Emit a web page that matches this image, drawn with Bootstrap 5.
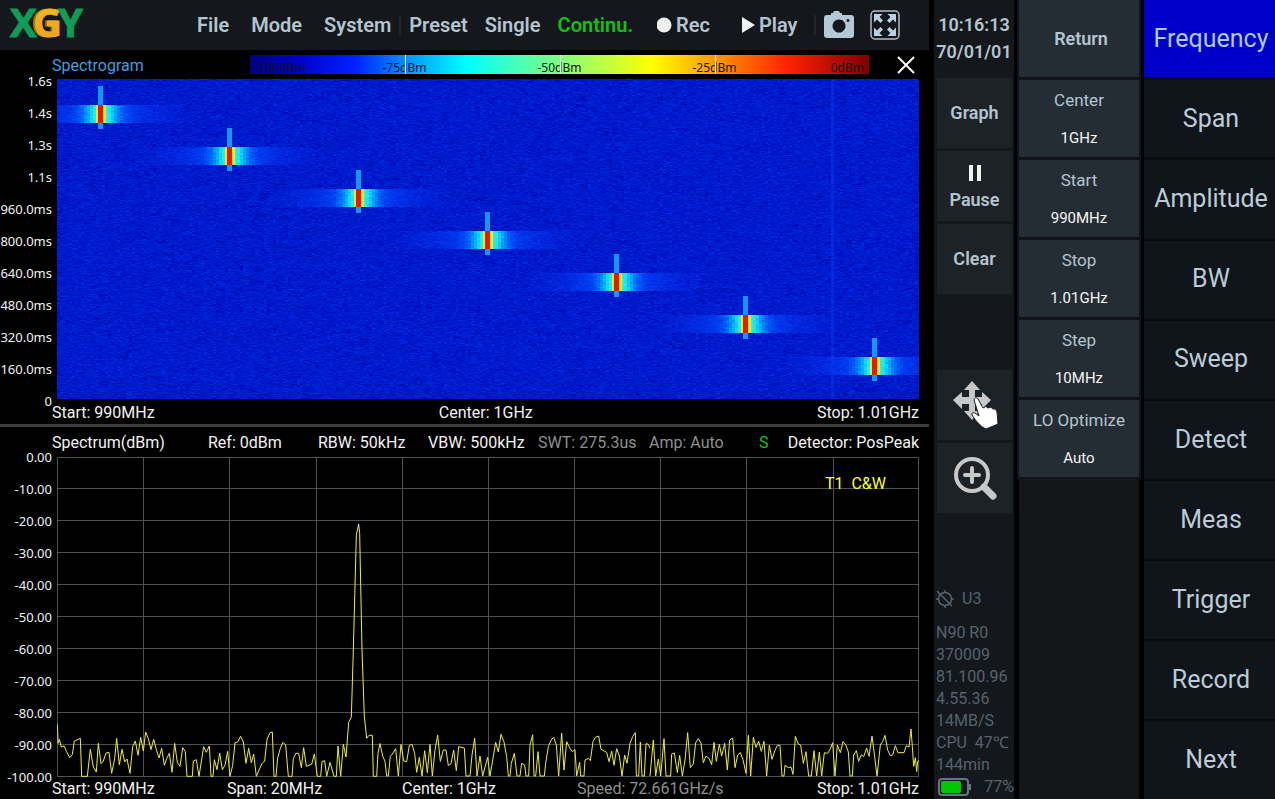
<!DOCTYPE html>
<html lang="en">
<head>
<meta charset="utf-8">
<meta name="viewport" content="width=device-width, initial-scale=1">
<title>Spectrum Analyzer</title>
<link rel="stylesheet" href="https://cdn.jsdelivr.net/npm/bootstrap@5.3.0/dist/css/bootstrap.min.css">
<style>
  body { background: #000; color: #f2f2f2; font: 16px/22px Roboto, "Liberation Sans", sans-serif; }
  button { border: 0; padding: 0; background: none; color: inherit; }
  .shell { display: grid; grid-template-columns: minmax(0, 1fr) 80px 120px 131px; column-gap: 5px; min-height: 100vh; }
  .topbar { height: 50px; background: #14171b; color: #b4c4d0; padding: 0 29px 0 8px; }
  .topbar button { font-size: 20px; line-height: 24px; font-weight: 600; white-space: nowrap; }
  .menu-a { gap: 22px; margin-left: 113px; }
  .menu-b { gap: 17px; margin-left: 8px; }
  .play { margin-left: 32px; }
  .rule { width: 2px; height: 20px; background: #22262a; }
  .continuous { color: #12c212; }
  .sg-head { height: 29px; padding: 2px 12px 0 52px; }
  .sg-title { color: #3d9ee0; width: 198px; }
  .scale { width: 619px; height: 19px; margin-top: -3px; color: #10131c; font: 12px/25px "Noto Sans", sans-serif;
    background: linear-gradient(90deg, #000080 0, #0000c8 8%, #0022ff 17%, #0090ff 25%, #00ffff 35%, #80ff80 50%, #ffff00 65%, #ff9a00 75%, #ff2000 87%, #800000 100%); }
  .scale span { flex: 1; position: relative; text-align: center; height: 19px; }
  .scale .edge { flex: 0 0 77px; padding: 0 5px; }
  .scale .tick::before { content: ""; position: absolute; left: 50%; top: 0; width: 1px; height: 19px; background: #fff; }
  .plot { flex: 1 1 0; min-height: 200px; }
  .axis { width: 57px; padding-right: 5px; font: 13px/16px "Noto Sans", sans-serif; text-align: right; white-space: nowrap; }
  .sg-axis { margin: -6px 0 -10px; }
  .sp-axis { margin: -8px 0; }
  .field { position: relative; margin-right: 10px; }
  .field canvas, .field svg { position: absolute; inset: 0; width: 100%; height: 100%; }
  .trace-name { position: absolute; top: 16px; right: 33px; color: #ffff28; }
  .foot { padding: 0 10px 0 52px; white-space: nowrap; }
  .sg-foot { height: 25px; line-height: 27px; }
  .divider { height: 3px; background: #3c3c3e; }
  .sp-head { display: grid; grid-template-columns: 156fr 110fr 110fr 110fr 111fr 110fr 27fr 133fr; height: 30px; line-height: 32px; }
  .sp-foot { display: grid; grid-template-columns: repeat(4, 175fr) 167fr; height: 22px; line-height: 24px; }
  .dim { color: #8f8f8f; }
  .side { background: #14171b; padding: 11px 2px 1px; }
  .side, .params button { color: #b4c4d0; }
  .clock { font-size: 18px; line-height: 27px; font-weight: 600; height: 67px; white-space: nowrap; }
  .tool { height: 70px; margin: 0 0 3px 1px; background: #1d2227; font-size: 18px; font-weight: 600; }
  .tools-low { margin-top: 73px; }
  .stats { color: #56636d; margin-top: auto; margin-right: -2px; white-space: nowrap; }
  .params { background: #141619; }
  .param { height: 77px; margin-bottom: 3px; background: #252d34; outline: 2px solid #10141a; font-size: 17px; }
  .param-back { font-size: 18px; font-weight: 600; }
  .param-value { color: #f5f5f5; font-size: 15px; }
  .modes { background: #0a0e12; gap: 3px; }
  .mode { flex: 1; background: #0f151b; color: #bccbd6; font-size: 25px; padding-left: 3px; }
  .mode.active { background: #0000c8; color: #aecbf2; }
</style>
</head>
<body>
<div class="shell">
  <main class="d-flex flex-column">
    <header class="topbar d-flex align-items-center">
      <svg width="76" height="36" role="img" aria-label="XGY" font-family="Open Sans" font-weight="700" font-size="40">
        <defs>
          <linearGradient id="leaf" x2="1" y2="1"><stop stop-color="#16a04b"/><stop offset="1" stop-color="#079a64"/></linearGradient>
          <linearGradient id="gold" x2="0" y2="1"><stop stop-color="#f2c51c"/><stop offset="1" stop-color="#e69a1c"/></linearGradient>
        </defs>
        <text x="2" y="30" fill="url(#leaf)" stroke="#0d9c56">X</text>
        <text x="23" y="30" fill="#a86b17" stroke="#a86b17">G</text>
        <text x="25" y="30" fill="url(#gold)" stroke="#ecb01c">G</text>
        <text x="50" y="30" fill="url(#leaf)" stroke="#0d9c56">Y</text>
      </svg>
      <nav class="d-flex menu-a"><button>File</button><button>Mode</button><button>System</button></nav>
      <span class="rule ms-2"></span>
      <nav class="d-flex menu-b"><button>Preset</button><button>Single</button><button class="continuous">Continu.</button></nav>
      <button class="d-flex align-items-center gap-1 ms-4"><svg width="15" height="16"><circle cx="7" cy="8" r="7.500" fill="#f0f0f0"/></svg>Rec</button>
      <button class="play d-flex align-items-center gap-1"><svg width="13" height="18"><path d="M0 1 13 9 0 17z" fill="#f0f0f0"/></svg>Play</button>
      <span class="rule ms-auto"></span>
      <button class="ms-2" aria-label="Screenshot"><svg class="d-block" width="30" height="28" fill="#b4c8d6"><path fill-rule="evenodd" d="M3 4h4V2h2l1-2h5l1 2h2v2h9q3 0 3 3v17q0 3-3 3H3q-3 0-3-3V7q0-3 3-3zm12 4.500a6.500 6.500 0 1 0 .01 0zM24 8a1.500 1.500 0 1 0 .01 0z"/></svg></button>
      <button class="ms-3" aria-label="Full screen"><svg class="d-block" width="30" height="30" viewBox="0 0 30 30"><rect x="1" y="1" width="28" height="28" rx="4" fill="none" stroke="#b4bec6" stroke-width="1.500"/><g fill="#b9d0df"><path id="arw" d="M4 4h8.500l-3 3 3.500 3.500-2.500 2.500L7 9.500l-3 3z"/><use href="#arw" transform="matrix(-1 0 0 1 30 0)"/><use href="#arw" transform="matrix(1 0 0 -1 0 30)"/><use href="#arw" transform="rotate(180 15 15)"/></g></svg></button>
    </header>

    <div class="sg-head d-flex align-items-center">
      <span class="sg-title">Spectrogram</span>
      <div class="scale d-flex">
        <span class="edge text-start">-100dBm</span><span class="tick">-75dBm</span><span class="tick">-50dBm</span><span class="tick">-25dBm</span><span class="edge text-end">0dBm</span>
      </div>
      <button class="ms-auto" aria-label="Close"><svg class="d-block" width="22" height="22"><path d="M3 2 19 18M19 2 3 18" stroke="#fff" stroke-width="2"/></svg></button>
    </div>
    <section class="plot d-flex">
      <div class="axis sg-axis d-flex flex-column justify-content-between">
        <span>1.6s</span><span>1.4s</span><span>1.3s</span><span>1.1s</span><span>960.0ms</span><span>800.0ms</span><span>640.0ms</span><span>480.0ms</span><span>320.0ms</span><span>160.0ms</span><span>0</span>
      </div>
      <div class="field flex-fill"><canvas id="waterfall" width="862" height="320"></canvas></div>
    </section>
    <div class="foot sg-foot d-flex justify-content-between"><span>Start: 990MHz</span><span>Center: 1GHz</span><span>Stop: 1.01GHz</span></div>
    <div class="divider"></div>
    <div class="foot sp-head">
      <span>Spectrum(dBm)</span><span>Ref: 0dBm</span><span>RBW: 50kHz</span><span>VBW: 500kHz</span><span class="dim">SWT: 275.3us</span><span class="dim">Amp: Auto</span><span class="continuous">S</span><span class="text-end">Detector: PosPeak</span>
    </div>
    <section class="plot d-flex">
      <div class="axis sp-axis d-flex flex-column justify-content-between">
        <span>0.00</span><span>-10.00</span><span>-20.00</span><span>-30.00</span><span>-40.00</span><span>-50.00</span><span>-60.00</span><span>-70.00</span><span>-80.00</span><span>-90.00</span><span>-100.00</span>
      </div>
      <div class="field flex-fill">
        <svg viewBox="0 0 2586 960" preserveAspectRatio="none" fill="none">
          <path stroke="#515151" vector-effect="non-scaling-stroke" shape-rendering="crispEdges" d="M1 1H2584V958H1zM1 95H2586M1 191H2586M1 287H2586M1 383H2586M1 479H2586M1 575H2586M1 671H2586M1 767H2586M1 863H2586M260 0V960M518 0V960M777 0V960M1035 0V960M1294 0V960M1552 0V960M1811 0V960M2069 0V960M2328 0V960"/>
          <g stroke="#f0f02a">
            <polyline vector-effect="non-scaling-stroke" transform="translate(-171 609)" points="172,193 173,210 174,250 178,238 184,261 192,258 200,275 209,293 217,284 223,243 241,235 245,349 262,349 271,268 280,321 289,336 295,250 303,311 310,303 318,279 327,277 335,340 344,296 350,235 358,314 366,268 374,306 381,297 390,340 398,260 406,243 414,286 422,232 430,273 437,216 445,236 453,269 461,238 469,269 477,294 485,265 493,316 500,296 508,280 516,337 524,250 532,308 540,319 548,263 556,275 561,349 577,349 580,303 589,299 597,349 611,260 619,277 628,258 633,349 639,349 643,299 651,329 659,279 667,329 675,316 683,274 690,349 698,316 705,248 713,246 722,229 730,246 738,310 746,265 754,308 761,282 769,349 777,330 786,311 794,303 801,238 810,218 817,216 822,349 828,349 833,294 841,265 849,247 857,255 865,349 876,349 880,296 888,280 896,280 904,323 911,263 919,319 935,313 943,282 952,349 962,349 966,305 974,302 980,349 990,307 1002,349 1009,349 1014,258 1022,349 1030,253 1038,291 1046,187 1054,171 1060,-30 1069,-375 1076,-408 1079,-380 1086,-30 1093,170 1100,235 1107,226 1117,226 1120,349 1130,349 1134,280 1140,250"/>
            <polyline vector-effect="non-scaling-stroke" transform="translate(969 789)" points="0,71 8,108 15,124 20,168 25,168 31,109 39,99 47,86 55,168 63,73 71,123 80,125 88,76 96,73 104,100 110,157 118,112 126,168 134,92 142,158 150,73 157,168 165,90 173,45 181,124 190,90 198,90 205,137 213,131 221,90 229,152 236,80 253,84 258,168 270,168 276,105 284,54 291,168 300,108 308,168 323,112 330,168 347,67 355,96 363,43 372,66 380,110 385,168 390,168 394,130 403,100 411,168 420,168 425,130 434,135 438,168 446,168 450,75 458,44 462,168 467,168 474,95 480,168 493,168 497,130 505,80 513,60 521,52 529,75 536,168 545,39 552,150 560,65 570,85 577,95 585,89 590,168 599,127 602,168 612,168 615,120 625,115 631,122 639,65 646,52 656,48 663,88 680,97 687,125 695,93 702,136 710,86 718,108 726,168 734,105 741,130 750,70 758,50 766,38 769,168 776,168 781,66 786,168 793,168 798,71 805,73 810,85"/>
            <polyline vector-effect="non-scaling-stroke" transform="translate(1779 789)" points="0,168 10,60 17,168 25,117 32,168 42,56 48,168 62,168 65,102 73,99 82,158 89,106 97,168 105,120 113,38 121,143 130,132 137,68 145,56 153,69 160,128 168,108 177,115 185,134 192,67 199,124 208,73 215,108 224,70 232,150 239,60 248,54 255,143 263,105 271,98 279,119 288,160 295,46 302,168 310,52 318,82 326,64 334,94 342,64 350,168 358,76 366,118 375,91 382,76 390,76 396,168 402,168 405,136 415,143 423,141 429,163 436,49 445,72 452,75 460,130 468,95 476,168 484,168 492,92 500,168 508,96 515,168 523,98 533,100 540,88 548,68 555,168 562,75 571,98 579,65 587,74 595,96 600,168 607,168 611,105 619,92 626,124 634,104 641,110 650,84 657,109 666,48 674,110 681,168 691,75 698,64 705,46 713,90 721,107 728,105 736,77 744,98 762,98 769,77 777,81 783,27 787,80 791,139 796,113 800,155 803,124 808,121"/>
          </g>
        </svg>
        <span class="trace-name">T1&nbsp; C&amp;W</span>
      </div>
    </section>
    <div class="foot sp-foot"><span>Start: 990MHz</span><span>Span: 20MHz</span><span>Center: 1GHz</span><span class="dim">Speed: 72.661GHz/s</span><span class="text-end">Stop: 1.01GHz</span></div>
  </main>

  <aside class="side d-flex flex-column">
    <div class="clock text-center">10:16:13<br>70/01/01</div>
    <button class="tool">Graph</button>
    <button class="tool d-flex flex-column align-items-center justify-content-center pt-1"><svg class="mb-2" width="12" height="16"><path d="M0 0h4v16H0zM8 0h4v16H8z" fill="#f0f0f0"/></svg>Pause</button>
    <button class="tool">Clear</button>
    <button class="tool tools-low" aria-label="Move"><svg width="46" height="50" viewBox="0 0 46 50"><path fill="#c8c8c8" d="M20 1 28 10H23V17H30V12L39 20 30 29V24H23V31H28L20 40 12 31H17V24H10V29L1 20 10 12V17H17V10H12z"/><path fill="#fff" stroke="#1d2227" d="M22 20q1-4 4-1l5 9q3-3 5 0 3-2 5 1 3-1 4 3l1 12-12 5q-7-3-14-14-1-3 3-2l4 3z"/></svg></button>
    <button class="tool" aria-label="Zoom"><svg width="46" height="46" viewBox="0 0 46 46" fill="none" stroke="#c8c8c8"><circle cx="20" cy="20" r="16" stroke-width="4"/><path d="M20 13V27M13 20H27" stroke-width="4" stroke-linecap="round"/><path d="M32 32 41 41" stroke-width="7" stroke-linecap="round"/></svg></button>
    <div class="stats">
      <div class="d-flex align-items-center gap-2 mb-2 pb-1"><svg width="18" height="20" viewBox="0 0 18 20" fill="none" stroke="#56636d" stroke-width="1.500"><circle cx="9" cy="10" r="6.500"/><path d="M9 1V4M9 16V19M0 10H3M15 10H18M1 2 16 17"/></svg>U3</div>
      <div>N90 R0</div><div>370009</div><div>81.100.96</div><div>4.55.36</div><div>14MB/S</div><div>CPU&nbsp; 47℃</div><div>144min</div>
      <div class="d-flex align-items-center justify-content-between"><svg width="35" height="18"><rect x="3" y="1" width="29" height="16" rx="3" fill="none" stroke="#68747e" stroke-width="2"/><rect x="5" y="3" width="20" height="12" rx="2" fill="#00c800"/><path d="M34 6V12" stroke="#68747e" stroke-width="2"/></svg>77%</div>
    </div>
  </aside>

  <aside class="params d-flex flex-column">
    <button class="param param-back ps-1">Return</button>
    <button class="param"><span class="d-block mb-3">Center</span><span class="d-block param-value">1GHz</span></button>
    <button class="param"><span class="d-block mb-3">Start</span><span class="d-block param-value">990MHz</span></button>
    <button class="param"><span class="d-block mb-3">Stop</span><span class="d-block param-value">1.01GHz</span></button>
    <button class="param"><span class="d-block mb-3">Step</span><span class="d-block param-value">10MHz</span></button>
    <button class="param"><span class="d-block mb-3">LO Optimize</span><span class="d-block param-value">Auto</span></button>
  </aside>

  <nav class="modes d-flex flex-column">
    <button class="mode active">Frequency</button><button class="mode">Span</button><button class="mode">Amplitude</button><button class="mode">BW</button><button class="mode">Sweep</button><button class="mode">Detect</button><button class="mode">Meas</button><button class="mode">Trigger</button><button class="mode">Record</button><button class="mode">Next</button>
  </nav>
</div>
<script src="https://cdn.jsdelivr.net/npm/bootstrap@5.3.0/dist/js/bootstrap.bundle.min.js"></script>
<script>
  // Waterfall: noise floor, seven pulses with their side lobes, and a weak spur.
  const c = document.getElementById('waterfall').getContext('2d');
  let seed = 7;
  const rnd = () => (seed = (seed * 16807) % 2147483647) / 2147483647;
  for (let y = 0; y < 320; y++) for (let x = 0; x < 862; x += 3) {
    const n = (rnd() + rnd() - 1);
    c.fillStyle = `rgb(0,${Math.round(26 + n * 18)},${Math.round(204 + n * 24)})`;
    c.fillRect(x, y, 3, 1);
  }
  c.fillStyle = 'rgba(10,70,255,.35)'; c.fillRect(774, 0, 3, 320);
  // Side-lobe colour by distance from the carrier: [distance, r, g, b, alpha]
  const lobes = [[0, 60, 245, 215, 1], [8, 30, 235, 240, 1], [13, 0, 180, 255, 1], [19, 0, 115, 255, .9], [28, 0, 75, 255, .7], [50, 5, 60, 250, .45], [95, 5, 50, 240, 0]];
  [44, 173, 302, 431, 560, 689, 818].forEach((x, i) => {
    const top = 7 + i * 42;
    for (let r = top + 19; r < top + 37; r++) for (let d = -95; d < 95; d += 3) {
      const a = Math.min(94, Math.abs(d + 1) * (.9 + rnd() * .2));
      const j = lobes.findIndex(l => l[0] > a), p = lobes[j - 1], q = lobes[j];
      const t = (a - p[0]) / (q[0] - p[0]);
      const v = p.map((m, s) => m + (q[s] - m) * t);
      c.fillStyle = `rgba(${v[1] | 0},${(v[2] + rnd() * 20 - 10) | 0},${v[3] | 0},${v[4]})`;
      c.fillRect(x + d, r, 3, 1);
    }
    c.fillStyle = '#1496ff'; c.fillRect(x - 3, top, 5, 43);
    c.fillStyle = '#f4e62a'; c.fillRect(x - 5, top + 19, 10, 18);
    c.fillStyle = '#e31a04'; c.fillRect(x - 3, top + 19, 5, 18);
  });
</script>
</body>
</html>
